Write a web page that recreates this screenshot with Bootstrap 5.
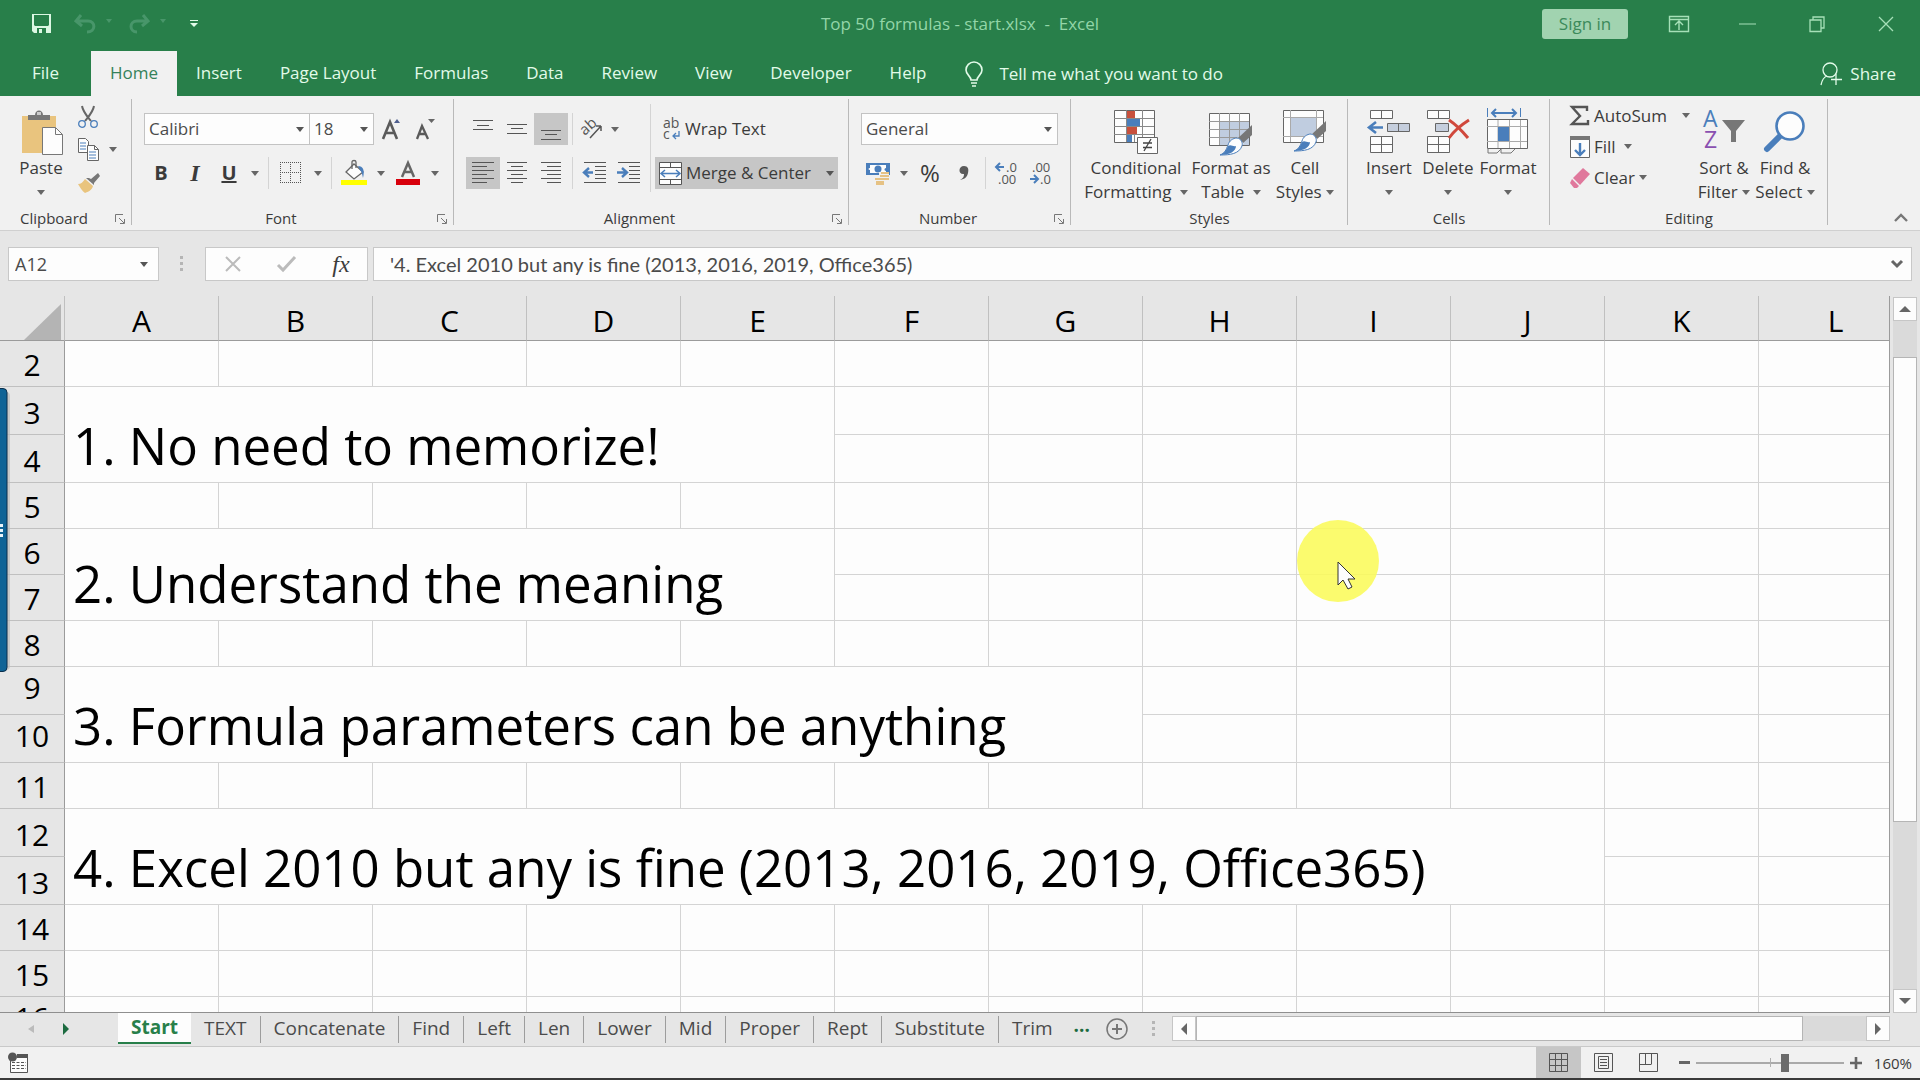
<!doctype html>
<html lang="en">
<head>
<meta charset="utf-8">
<meta name="viewport" content="width=device-width, initial-scale=1">
<title>Top 50 formulas - start.xlsx - Excel</title>
<link href="https://cdn.jsdelivr.net/npm/bootstrap@5.3.0/dist/css/bootstrap.min.css" rel="stylesheet">
<script src="https://cdn.jsdelivr.net/npm/bootstrap@5.3.0/dist/js/bootstrap.bundle.min.js"></script>
<style>
:root{--green:#287f4a;--mint:#e2fbe9;--ink:#3b3b3b;--chrome:#e6e6e6;--ribbon:#f1f1f1;--line:#b9b9b9;--blue:#4a7ebb}
body{font-family:"Open Sans","Noto Sans",sans-serif;font-size:17px;line-height:24px;color:var(--ink);background:var(--chrome)}
button{background:none;border:0;padding:0;color:inherit;flex:none}
svg{display:block;flex:none;overflow:visible}
/* title bar */
.titlebar{background:var(--green);height:51px;color:#93d6a8}
.titlebar .edge{flex:1 1 0}
.winbtn{width:69px;height:38px}
.signin{background:#a1d3b0;color:#3c8a5b;width:86px;height:30px;border-radius:3px}
.savebtn{margin-left:32px}
/* ribbon tabs */
.tabstrip{background:var(--green);height:45px}
.tabstrip .nav-link{color:var(--mint);padding:0 19px;line-height:44px;border-radius:0}
.tabstrip .nav-link.active{background:var(--ribbon);color:#35825a}
.tabstrip .filetab{width:91px;padding:0;text-align:center}
.tellme,.sharebtn{color:var(--mint)}
/* ribbon */
.ribbon{background:var(--ribbon);height:135px;border-bottom:1px solid #d0d0d0}
.rgroup{flex:none;background:linear-gradient(var(--line),var(--line)) right 3px/1px 126px no-repeat}
.rgroup .rbody{height:112px}
.rlabel{height:22px;line-height:21px;font-size:15px;text-align:center;padding-right:24px}
.rlabel.wide{padding-right:0}
.rlabel .launch{position:absolute;right:7px;top:6px}
.rows{padding-top:17px;display:flex;flex-direction:column;gap:12px}
.rows>div{display:flex;height:32px;align-items:center}
.tool,.tool36{width:34px;height:32px;display:flex;align-items:center;justify-content:center}
.tool36{width:36px}
.carat{width:18px;height:32px;display:flex;align-items:center;justify-content:center}
.on{background:#c6c6c6}
.vbar{width:9px;height:32px;flex:none;background:linear-gradient(#d4d4d4,#d4d4d4) center/1px 100% no-repeat}
.vbar.tall{width:10px;height:88px;margin-top:8px}
.combo{appearance:none;height:32px;border:1px solid #c3c3c3;border-radius:0;color:#4b4b4b;padding:0 4px;background:#fdfdfd url("data:image/svg+xml,%3Csvg xmlns='http://www.w3.org/2000/svg' width='8' height='5'%3E%3Cpath d='M0 0h8L4 5z' fill='%23555'/%3E%3C/svg%3E") right 5px center no-repeat}
.big{padding-top:7px;height:112px}
.big svg.pic{margin:0 auto;height:48px}
.big .two{display:block;height:24px;white-space:nowrap}
.big .two svg,.flat svg.dd{display:inline-block;vertical-align:middle}
.flat{height:31px;display:flex;align-items:center;white-space:nowrap}
/* formula bar */
.fbar{padding:16px 8px 15px}
.fbox{background-color:#fdfdfd;border:1px solid #c8c8c8;height:34px;border-radius:0}
.namebox{width:151px;padding:0 6px;font-size:18px;color:#4b4b4b;background-position:right 10px center}
.fgap{width:46px}
.fxbox{width:163px;margin-right:5px}
.fxbox button{width:54px;height:32px;display:flex;align-items:center;justify-content:center}
.ftext{font-family:Lato,"Open Sans",sans-serif;font-size:20px;color:#4b4b4b;border:0;background:none;outline:0;padding:0 16px;min-width:0}
/* sheet */
.sheetwrap{min-height:0}
.gridpane{border-right:1px solid #9b9b9b;border-bottom:1px solid #8f8f8f;background:#fdfdfd}
.cells{table-layout:fixed;border-collapse:separate;border-spacing:0;width:1913px;color:#000}
.cells td{border-right:1px solid #d4d4d4;border-bottom:1px solid #d4d4d4;padding:0 8px}
.cells th{background:var(--chrome);font-weight:400;font-size:30px;padding:0;text-align:center;border-right:1px solid #c0c0c0;border-bottom:1px solid #9b9b9b;line-height:42px;vertical-align:bottom;overflow:hidden}
.cells tbody th{border-right-color:#9b9b9b;border-bottom-color:#c0c0c0}
.cells tbody th.hi{vertical-align:top}
.cells thead th{line-height:38px}
.cells .say{font-size:51px;line-height:74px;vertical-align:bottom;white-space:nowrap}
.h45{height:45px}.h46{height:46px}.h48{height:48px}
.vscroll{width:30px;padding:1px 3px 0}
.sbtn{background:#fdfdfd;border:1px solid #c6c6c6;width:24px;height:24px;display:flex;align-items:center;justify-content:center}
.track{background:#dadada}
.thumbbar{background:#fdfdfd;border:1px solid #b5b5b5}
.pointer{position:absolute;left:1296px;top:224px}
.sidetab{position:absolute;left:0;top:388px;z-index:3}
/* sheet tabs */
.sheetbar{height:34px;color:#4b4b4b;border-bottom:1px solid #c9c9c9;font-size:19px}
.sheetnav{width:118px;height:31px}
.stab{color:#4b4b4b;padding:0 13px;line-height:24px;height:27px;border-right:1px solid #9d9d9d;text-decoration:none;margin-top:3px;white-space:nowrap}
.stab.current{background:#fdfdfd;color:#287f4a;font-weight:700;margin-top:0;height:31px;line-height:29px;border-right:0;border-bottom:2px solid #287f4a}
.stab.final{border-right:0}
.hscroll{padding:3px 30px 5px 0}
.hscroll .sbtn{width:24px;height:25px}
/* status bar */
.statusbar{height:33px;background:var(--ribbon);border-bottom:2px solid #3a3a3a}
.viewbtn{width:45px;height:31px;display:flex;align-items:center;justify-content:center}
.zoomer{appearance:none;width:148px;height:18px;margin:0 6px;background:linear-gradient(#b0b0b0,#b0b0b0) 74px center/1px 9px no-repeat,linear-gradient(#a9a9a9,#a9a9a9) center/100% 2px no-repeat}
.zoomer::-webkit-slider-thumb{appearance:none;width:8px;height:18px;background:#6b6b6b}
.pct{font-size:15px;width:50px;padding-right:8px}
</style>
</head>
<body class="vh-100 d-flex flex-column overflow-hidden position-relative">

<!-- shared symbols -->
<svg width="0" height="0" class="position-absolute" aria-hidden="true">
  <symbol id="dd" viewBox="0 0 8 5"><path d="M0 0h8L4 5z"/></symbol>
  <symbol id="launch" viewBox="0 0 10 10"><path d="M.5 8V.5H8M4 4l5 5M9.5 5v4.5H5" fill="none" stroke="#777"/></symbol>
  <symbol id="brush" viewBox="0 0 34 32"><path d="M33 1v10L23 20l-5-5z" fill="#777"/><path d="m18 14 6 6" stroke="#f1f1f1" stroke-width="2"/><path d="M18 14c4 1 6 4 5 8-3 8-12 9-22 9 5-2 6-5 8-10 1-4 5-7 9-7z" fill="#fdfdfd" stroke="#4a7ebb"/><path d="M1 31c5-2 6-5 8-9 3-2 5 1 8 0 0 5-6 9-16 9z" fill="#4a7ebb"/></symbol>
</svg>

<header class="titlebar d-flex align-items-center flex-shrink-0 pb-1">
  <div class="edge d-flex align-items-center">
    <button class="savebtn" aria-label="Save"><svg width="20" height="20" viewBox="0 0 20 20"><path d="M0 0h19v19H2l-2-2z" fill="#dcf7e3"/><path d="M2 1h15v10l-1 1H3l-1-1z" fill="#287f4a"/><path d="M5 14h9v5H5z" fill="#287f4a"/><path d="M7 15h3v4H7z" fill="#dcf7e3"/></svg></button>
    <button aria-label="Undo" class="ms-4 ps-0"><svg width="40" height="20" viewBox="1 0 40 20" fill="none" stroke="#48966a" stroke-width="3"><path d="M6 1 1 7l6 5M2 7h11c8 0 8 11-1 11"/><path d="M31 5h6l-3 4z" fill="#48966a" stroke="none"/></svg></button>
    <button aria-label="Redo" class="ms-2"><svg width="50" height="20" viewBox="-5 0 50 20" fill="none" stroke="#48966a" stroke-width="3"><path d="m14 1 5 6-6 5M18 7H8C0 7 0 18 8 18"/><path d="M31 5h6l-3 4z" fill="#48966a" stroke="none"/></svg></button>
    <button aria-label="Customize Quick Access Toolbar" class="ms-3"><svg width="8" height="8" viewBox="0 0 8 8" fill="#e2fbe9"><path d="M0 0h8v1H0zM0 3h8L4 7z"/></svg></button>
  </div>
  <div class="text-nowrap">Top 50 formulas - start.xlsx &nbsp;-&nbsp; Excel</div>
  <div class="edge d-flex align-items-center justify-content-end">
    <button class="signin me-3">Sign in</button>
    <button class="winbtn" aria-label="Ribbon display options"><svg class="mx-auto" width="20" height="16" viewBox="0 0 20 16" fill="none" stroke="#a6e0b8"><path d="M.5.5h19v15H.5zM1 3.5h18M10 14V6M6 9l4-4 4 4" stroke-width="1.4"/></svg></button>
    <button class="winbtn" aria-label="Minimize"><svg class="mx-auto" width="17" height="2"><path d="M0 1h17" stroke="#a6e0b8"/></svg></button>
    <button class="winbtn" aria-label="Restore"><svg class="mx-auto" width="16" height="16" viewBox="0 0 16 16" fill="none" stroke="#a6e0b8"><path d="M1 4h11v11.500H1zM4 4V1h11v11h-3" stroke-width="1.300"/></svg></button>
    <button class="winbtn" aria-label="Close"><svg class="mx-auto" width="16" height="16"><path d="m1 1 14 14M15 1 1 15" stroke="#a6e0b8" stroke-width="1.300"/></svg></button>
  </div>
</header>

<nav class="tabstrip d-flex align-items-stretch flex-shrink-0">
  <div class="nav flex-nowrap">
    <a class="nav-link filetab" href="#">File</a>
    <a class="nav-link active" href="#">Home</a>
    <a class="nav-link" href="#">Insert</a>
    <a class="nav-link" href="#">Page Layout</a>
    <a class="nav-link" href="#">Formulas</a>
    <a class="nav-link" href="#">Data</a>
    <a class="nav-link" href="#">Review</a>
    <a class="nav-link" href="#">View</a>
    <a class="nav-link" href="#">Developer</a>
    <a class="nav-link" href="#">Help</a>
  </div>
  <button class="tellme d-flex align-items-center ms-3">
    <svg class="mx-1" width="18" height="26" viewBox="0 0 18 26" fill="none" stroke="#e2fbe9" stroke-width="1.600"><path d="M6 19c0-4-5-5-5-10a8 8 0 0 1 16 0c0 5-5 6-5 10zM6 22h6M7 25h4"/></svg>
    <span class="ms-2 ps-1">Tell me what you want to do</span></button>
  <button class="sharebtn d-flex align-items-center ms-auto me-4">
    <svg class="me-2" width="22" height="24" viewBox="0 0 22 24" fill="none" stroke="#e2fbe9" stroke-width="1.300"><circle cx="10" cy="8" r="7"/><path d="M1 23c1-5 3-8 6-9M16 12v11M11 17.500h11"/></svg>Share</button>
</nav>

<section class="ribbon d-flex position-relative flex-shrink-0" aria-label="Home ribbon">
  <div class="rgroup" style="width:132px">
    <div class="rbody d-flex ps-3">
      <button class="big" style="width:50px">
        <svg class="pic" width="44" viewBox="0 0 44 48"><path d="M3 8h34v37H3z" fill="#e9c47e"/><path d="M9 7h7c0-6 8-6 8 0h7v5H9z" fill="#777"/><path d="M18 4h4v3h-4z" fill="#ccc"/><path d="M23.500 19.500h13l7 7v20h-20z" fill="#fdfdfd" stroke="#777"/><path d="M36.500 19.500v7h7" fill="none" stroke="#777"/></svg>
        <span class="two">Paste</span><span class="two"><svg width="8" height="5" fill="#666"><use href="#dd"/></svg></span></button>
      <div class="pt-1 ps-2 ms-1">
        <button class="d-flex align-items-center" style="height:33px" aria-label="Cut"><svg width="20" height="22" viewBox="0 0 20 22" fill="none"><path d="M4 0c1 6 5 10 9 15M16 0c-1 6-5 10-9 15" stroke="#666" stroke-width="2"/><circle cx="4" cy="18" r="3.300" stroke="#4a7ebb" stroke-width="1.300"/><circle cx="16" cy="18" r="3.300" stroke="#4a7ebb" stroke-width="1.300"/></svg></button>
        <button class="d-flex align-items-center" style="height:33px" aria-label="Copy"><svg width="21" height="23" viewBox="0 0 21 23" fill="#fdfdfd" stroke="#666"><path d="M.5.5h7l3 3v11H.5z"/><path d="M2 5h6M2 8h6M2 11h6" stroke="#4a7ebb"/><path d="M9.500 7.500h7l4 4v11h-11z"/><path d="M16.500 7.500v4h4" fill="none"/><path d="M11 14h7M11 17h7M11 20h7" stroke="#4a7ebb"/></svg><svg class="ms-2" width="12" height="5" fill="#666"><use href="#dd"/></svg></button>
        <button class="d-flex align-items-center" style="height:33px" aria-label="Format Painter"><svg width="22" height="20" viewBox="0 0 22 20"><path d="M20 0l2 3-6 7 0 2-8-7h3l2 1z" fill="#777"/><path d="M7 6l8 7c-1 4-5 6-8 7-3-2-5-6-7-9 3 0 5-2 7-5z" fill="#e9c47e"/></svg></button>
      </div>
    </div>
    <div class="rlabel position-relative">Clipboard<svg class="launch" width="10" height="10"><use href="#launch"/></svg></div>
  </div>

  <div class="rgroup" style="width:322px">
    <div class="rbody rows ps-2 ms-1">
      <div>
        <select class="combo" aria-label="Font" style="width:166px"><option>Calibri</option></select>
        <select class="combo border-start-0" aria-label="Font size" style="width:64px"><option>18</option></select>
        <button class="tool" aria-label="Increase font size"><svg width="20" height="24" viewBox="0 0 20 24"><path d="M2 22 9 5l7 17M4.500 16h9" fill="none" stroke="#5a5a5a" stroke-width="2.600"/><path d="M13 6h6l-3-4z" fill="#4f5f8f"/></svg></button>
        <button class="tool" aria-label="Decrease font size"><svg width="20" height="24" viewBox="0 0 20 24"><path d="M2 22 7 9l6 13M4 17h7" fill="none" stroke="#5a5a5a" stroke-width="2.300"/><path d="M13 2h7l-3.500 4z" fill="#666"/></svg></button>
      </div>
      <div>
        <button class="tool fw-bold fs-5">B</button>
        <button class="tool fs-4 fst-italic fw-bold" style="font-family:'Liberation Serif',serif">I</button>
        <button class="tool fw-bold fs-5 text-decoration-underline">U</button>
        <button class="carat" aria-label="Underline options"><svg width="8" height="5" fill="#666"><use href="#dd"/></svg></button>
        <span class="vbar"></span>
        <button class="tool36" aria-label="Borders"><svg width="22" height="22" viewBox="0 0 22 22" fill="none" stroke="#555" stroke-dasharray="1 1"><path d="M.5 0v22M10.500 0v22M20.500 0v22M0 .5h21M0 10.500h21"/><path d="M0 20.500h22"/></svg></button>
        <button class="carat" aria-label="Border options"><svg width="8" height="5" fill="#666"><use href="#dd"/></svg></button>
        <span class="vbar"></span>
        <button class="tool36" aria-label="Fill color"><svg width="26" height="26" viewBox="0 0 26 26"><path d="m13 4 9 8-9 7-8-7z" fill="#fdfdfd" stroke="#666" stroke-width="1.300"/><path d="M11 9V2c0-2 4-2 4 0v6" fill="none" stroke="#666" stroke-width="1.300"/><path d="M17 6c5 0 7 4 5 12-1-4-1-6-3-8z" fill="#4a7ebb"/><path d="M0 20h26v5H0z" fill="#ff0"/></svg></button>
        <button class="carat" aria-label="Fill options"><svg width="8" height="5" fill="#666"><use href="#dd"/></svg></button>
        <button class="tool36" aria-label="Font color"><svg width="24" height="24" viewBox="0 0 24 24"><path d="m6 16 6-14 6 14M8 11h8" fill="none" stroke="#666" stroke-width="2.500"/><path d="M0 18h24v6H0z" fill="#d8000c"/></svg></button>
        <button class="carat" aria-label="Font color options"><svg width="8" height="5" fill="#666"><use href="#dd"/></svg></button>
      </div>
    </div>
    <div class="rlabel position-relative">Font<svg class="launch" width="10" height="10"><use href="#launch"/></svg></div>
  </div>

  <div class="rgroup" style="width:395px">
    <div class="rbody d-flex ps-2 ms-1">
      <div class="rows">
        <div>
          <button class="tool" aria-label="Top align"><svg width="20" height="24"><path d="M0 3.500h20M4 8.500h12M0 12.500h20" stroke="#555"/></svg></button>
          <button class="tool" aria-label="Middle align"><svg width="20" height="24"><path d="M0 7.500h20M4 11.500h12M0 16.500h20" stroke="#555"/></svg></button>
          <button class="tool on" aria-label="Bottom align"><svg width="20" height="24"><path d="M0 13.500h20M4 17.500h12M0 22.500h20" stroke="#555"/></svg></button>
          <span class="vbar"></span>
          <button class="d-flex align-items-center ps-1" aria-label="Orientation"><svg width="26" height="22" viewBox="0 0 26 22" fill="#555"><text x="0" y="14" font-size="15" transform="rotate(-42 7 11)">ab</text><path d="M9 20 20 8M20 8v5M20 8h-5" fill="none" stroke="#555" stroke-width="1.500"/></svg><svg class="ms-1" width="8" height="5" fill="#666"><use href="#dd"/></svg></button>
        </div>
        <div>
          <button class="tool on" aria-label="Align left"><svg width="22" height="24"><path d="M0 1.500h22M0 5.500h15M0 9.500h22M0 13.500h15M0 17.500h22M0 21.500h15" stroke="#555"/></svg></button>
          <button class="tool" aria-label="Center"><svg width="20" height="24"><path d="M0 1.500h20M4 5.500h12M0 9.500h20M4 13.500h12M0 17.500h20M4 21.500h12" stroke="#555"/></svg></button>
          <button class="tool" aria-label="Align right"><svg width="20" height="24"><path d="M0 1.500h20M6 5.500h14M0 9.500h20M6 13.500h14M0 17.500h20M6 21.500h14" stroke="#555"/></svg></button>
          <span class="vbar"></span>
          <button class="tool" aria-label="Decrease indent"><svg width="23" height="24"><path d="M1 1.500h22M12 5.500h11M12 9.500h11M12 13.500h11M12 17.500h11M1 21.500h22" stroke="#555"/><path d="M10 11.500H1M6 7l-5 4.500L6 16" fill="none" stroke="#4a7ebb" stroke-width="2.400"/></svg></button>
          <button class="tool" aria-label="Increase indent"><svg width="23" height="24"><path d="M1 1.500h22M12 5.500h11M12 9.500h11M12 13.500h11M12 17.500h11M1 21.500h22" stroke="#555"/><path d="M0 11.500h9M5 7l5 4.500L5 16" fill="none" stroke="#4a7ebb" stroke-width="2.400"/></svg></button>
        </div>
      </div>
      <span class="vbar tall"></span>
      <div class="rows">
        <div><button class="d-flex align-items-center ps-2"><svg width="18" height="26" viewBox="0 0 18 26" fill="#555"><text x="0" y="12" font-size="14">ab</text><text x="0" y="23" font-size="14">c</text><path d="M16 15v5h-6M13 17l-3 3 3 3" fill="none" stroke="#4a7ebb" stroke-width="1.300"/></svg><span class="ms-1">Wrap Text</span></button></div>
        <div><button class="on d-flex align-items-center h-100 ps-1" style="width:183px"><svg width="23" height="23" viewBox="0 0 23 23"><path d="M.5.5h22v22H.5z" fill="#fdfdfd" stroke="#555"/><path d="M0 5.500h23M0 17.500h23M11.500 0v5M11.500 18v5" stroke="#555"/><path d="M3 11.500h17M6 8l-4 3.500L6 15M17 8l4 3.500-4 3.500" fill="none" stroke="#4a7ebb" stroke-width="1.500"/></svg><span class="ms-1">Merge &amp; Center</span><svg class="ms-auto me-1" width="8" height="5" fill="#555"><use href="#dd"/></svg></button></div>
      </div>
    </div>
    <div class="rlabel position-relative">Alignment<svg class="launch" width="10" height="10"><use href="#launch"/></svg></div>
  </div>

  <div class="rgroup" style="width:222px">
    <div class="rbody rows ps-2 ms-1">
      <div><select class="combo" aria-label="Number format" style="width:197px"><option>General</option></select></div>
      <div>
        <button class="tool" aria-label="Accounting format"><svg width="24" height="24" viewBox="0 0 24 24"><path d="M0 2h24v12H0z" fill="#4a7ebb"/><path d="M4 4h16v3c-2 0-2 3 0 3v2H4V9c-2 0-2-2 0-2z" fill="#fdfdfd"/><circle cx="12" cy="8" r="3.500" fill="#4a7ebb"/><path d="M13 11h10v13H9v-6h4z" fill="#f1f1f1"/><path d="M15 12h8M14 15h9M9 18h9M14 18h9M10 21h8M10 23h8" stroke="#e2b260" stroke-width="1.600"/></svg></button>
        <button class="carat" aria-label="Accounting options"><svg width="8" height="5" fill="#666"><use href="#dd"/></svg></button>
        <button class="tool fs-4">%</button>
        <button class="tool" aria-label="Comma style"><svg width="10" height="15" viewBox="0 0 10 15"><path d="M5 0c4 0 5 3 4 7-1 4-3 6-8 7 3-2 4-3 4-6C-1 9-1 0 5 0z" fill="#5a5a5a"/></svg></button>
        <span class="vbar"></span>
        <button class="tool" aria-label="Increase decimal"><svg width="24" height="24" fill="#555" font-size="13"><text x="11" y="11">.0</text><text x="3" y="23">.00</text><path d="M9 6H1M5 2 1 6l4 4" fill="none" stroke="#4a7ebb" stroke-width="2"/></svg></button>
        <button class="tool" aria-label="Decrease decimal"><svg width="24" height="24" fill="#555" font-size="13"><text x="3" y="11">.00</text><text x="11" y="23">.0</text><path d="M1 18h8M5 14l4 4-4 4" fill="none" stroke="#4a7ebb" stroke-width="2"/></svg></button>
      </div>
    </div>
    <div class="rlabel position-relative">Number<svg class="launch" width="10" height="10"><use href="#launch"/></svg></div>
  </div>

  <div class="rgroup" style="width:277px">
    <div class="rbody d-flex ps-2 ms-1">
      <button class="big" style="width:106px"><svg class="pic" width="44" viewBox="0 0 44 48"><path d="M.5 2.500h40v32H.5z" fill="#fdfdfd" stroke="#666"/><path d="M0 10.500h40M0 18.500h40M0 26.500h40M12.500 2v32M20.500 2v32M28.500 2v32" stroke="#888"/><path d="M13 3h8v7h-8zM13 19h10v7H13z" fill="#c8503c"/><path d="M13 11h13v7H13zM13 27h5v7h-5z" fill="#4a7ebb"/><path d="M23.500 29.500h20v16h-20z" fill="#fdfdfd" stroke="#666"/><path d="M29 35h9M29 39.500h9M37 31l-7 12" stroke="#444" stroke-width="1.300"/></svg>
        <span class="two">Conditional</span><span class="two">Formatting <svg class="ms-1" width="8" height="5" fill="#666"><use href="#dd"/></svg></span></button>
      <button class="big" style="width:84px"><svg class="pic" width="44" viewBox="0 0 44 48"><path d="M.5 5.500h40v32H.5z" fill="#fdfdfd" stroke="#666"/><path d="M11 14h29v23H11z" fill="#c0cde0"/><path d="M0 13.500h40M0 21.500h40M0 29.500h40M10.500 5v32M20.500 5v32M30.500 5v32" stroke="#999"/><use href="#brush" x="10" y="16" width="34" height="32"/></svg>
        <span class="two">Format as</span><span class="two">Table <svg class="ms-1" width="8" height="5" fill="#666"><use href="#dd"/></svg></span></button>
      <button class="big" style="width:64px"><svg class="pic" width="44" viewBox="0 0 44 48"><path d="M.5 2.500h40v32H.5z" fill="#fdfdfd" stroke="#666"/><path d="M8 10h26v18H8z" fill="#c0cde0"/><path d="M0 9.500h40M0 28.500h40M7.500 2v32M33.500 2v32" stroke="#aaa"/><use href="#brush" x="10" y="12" width="34" height="32"/></svg>
        <span class="two">Cell</span><span class="two">Styles <svg width="8" height="5" fill="#666"><use href="#dd"/></svg></span></button>
    </div>
    <div class="rlabel wide">Styles</div>
  </div>

  <div class="rgroup" style="width:202px">
    <div class="rbody d-flex ps-2 ms-1">
      <button class="big" style="width:58px"><svg class="pic" width="44" viewBox="0 0 44 48"><g fill="#fdfdfd" stroke="#666"><path d="M3.500 2.500h22v8h-22zM14.500 2v8M3.500 28.500h22v16h-22zM14.500 28v16M3 36.500h22"/><path d="M20.500 15.500h22v8h-22zM31.500 15v8" fill="#c5cedd"/></g><path d="M16 19.500H2M9 14l-7 5.500L9 25" fill="none" stroke="#4a7ebb" stroke-width="2.600"/></svg>
        <span class="two">Insert</span><span class="two"><svg width="8" height="5" fill="#666"><use href="#dd"/></svg></span></button>
      <button class="big" style="width:60px"><svg class="pic" width="44" viewBox="0 0 44 48"><g fill="#fdfdfd" stroke="#666"><path d="M1.500 2.500h22v8h-22zM12.500 2v8M1.500 28.500h22v16h-22zM12.500 28v16M1 36.500h22"/><path d="M9.500 15.500h13v8h-13z" fill="#c5cedd"/></g><path d="M23 12c6 4 14 12 19 18M43 12c-8 5-15 11-20 18" fill="none" stroke="#d0483c" stroke-width="3"/></svg>
        <span class="two">Delete</span><span class="two"><svg width="8" height="5" fill="#666"><use href="#dd"/></svg></span></button>
      <button class="big" style="width:60px"><svg class="pic" width="42" viewBox="0 0 42 48"><path d="M.5 11.500h40v29H.5z" fill="#fdfdfd" stroke="#666"/><path d="M0 18.500h40M0 33.500h40M11 12v28M22.500 12v28M33.500 12v28" stroke="#aaa"/><path d="M11 19h11v14H11z" fill="#4a7ebb"/><path d="M.5 0v9M33.500 0v9" stroke="#4a7ebb"/><path d="M5 5h24M9 1 5 5l4 4M25 1l4 4-4 4" fill="none" stroke="#4a7ebb" stroke-width="2"/><path d="M1 41v4h9l4-4v4h10l4-4" fill="none" stroke="#777"/></svg>
        <span class="two">Format</span><span class="two"><svg width="8" height="5" fill="#666"><use href="#dd"/></svg></span></button>
    </div>
    <div class="rlabel wide">Cells</div>
  </div>

  <div class="rgroup" style="width:278px">
    <div class="rbody d-flex ps-3">
      <div class="pt-1 ps-1" style="width:128px">
        <button class="flat w-100"><svg width="20" height="20" viewBox="0 0 20 20"><path d="M17 5V1H2l8 9-8 8h16v-4" fill="none" stroke="#555" stroke-width="2.400"/></svg><span class="ms-1">AutoSum</span><svg class="dd ms-auto me-1" width="8" height="5" fill="#666"><use href="#dd"/></svg></button>
        <button class="flat"><svg width="20" height="22" viewBox="0 0 20 22"><path d="M.5.500h19v21H.5z" fill="#fdfdfd" stroke="#666"/><path d="M0 0h20v4H0z" fill="#777"/><path d="M10 7v12M5 14l5 5 5-5" fill="none" stroke="#4a7ebb" stroke-width="2.400"/></svg><span class="ms-1 pe-1 me-1">Fill</span><svg class="dd" width="8" height="5" fill="#666"><use href="#dd"/></svg></button>
        <button class="flat"><svg width="20" height="20" viewBox="0 0 20 20"><path d="m13 0 7 6-10 11-7-7z" fill="#e0789c"/><path d="m2 11 7 7-2 2H4l-4-5z" fill="#e0789c"/></svg><span class="ms-1 pe-1">Clear</span><svg class="dd" width="8" height="5" fill="#666"><use href="#dd"/></svg></button>
      </div>
      <button class="big" style="width:60px"><svg class="pic" width="42" viewBox="0 0 42 48"><text x="0" y="19" font-size="23" fill="#4a7ebb">A</text><text x="1" y="40" font-size="23" fill="#8a50b0">Z</text><path d="M19 12h23L33 23v11h-5V23z" fill="#777"/></svg>
        <span class="two">Sort &amp;</span><span class="two">Filter <svg width="8" height="5" fill="#666"><use href="#dd"/></svg></span></button>
      <button class="big" style="width:62px"><svg class="pic" width="42" viewBox="0 0 42 48"><path d="M17 27 3 41" stroke="#4a7ebb" stroke-width="6" stroke-linecap="round"/><circle cx="26" cy="18" r="13.500" fill="#fdfdfd" stroke="#4a7ebb" stroke-width="2.600"/></svg>
        <span class="two">Find &amp;</span><span class="two">Select <svg width="8" height="5" fill="#666"><use href="#dd"/></svg></span></button>
    </div>
    <div class="rlabel wide">Editing</div>
  </div>
  <button class="ms-auto align-self-end me-2 pb-2" aria-label="Collapse the ribbon"><svg class="me-1" width="14" height="9"><path d="m1 8 6-6 6 6" fill="none" stroke="#777" stroke-width="2.400"/></svg></button>
</section>

<div class="fbar d-flex align-items-center flex-shrink-0">
  <select class="combo fbox namebox" aria-label="Name box"><option>A12</option></select>
  <span class="fgap"><svg class="mx-auto" width="4" height="16" fill="#b5b5b5"><path d="M0 0h3v3H0zM0 6h3v3H0zM0 12h3v3H0z"/></svg></span>
  <div class="fbox fxbox d-flex">
    <button aria-label="Cancel"><svg width="16" height="16"><path d="m1 1 14 14M15 1 1 15" stroke="#bbb" stroke-width="2"/></svg></button>
    <button aria-label="Enter"><svg width="20" height="16"><path d="m1 9 5 5L18 1" fill="none" stroke="#bbb" stroke-width="3"/></svg></button>
    <button class="fst-italic fs-4" style="font-family:'Liberation Serif',serif" aria-label="Insert function">fx</button>
  </div>
  <div class="fbox flex-fill d-flex align-items-center">
    <input class="ftext flex-fill" aria-label="Formula bar" value="'4. Excel 2010 but any is fine (2013, 2016, 2019, Office365)">
    <button class="me-1 pe-1" aria-label="Expand formula bar"><svg width="12" height="9"><path d="m1 1 5 5 5-5" fill="none" stroke="#666" stroke-width="3"/></svg></button>
  </div>
</div>

<main class="sheetwrap d-flex flex-fill position-relative">
  <div class="gridpane flex-fill overflow-hidden">
    <table class="cells">
      <colgroup><col style="width:65px"><col span="12"></colgroup>
      <thead><tr class="h45"><th><svg class="ms-4" width="38" height="36"><path d="M37 0v36H0z" fill="#b4b4b4"/></svg></th><th>A</th><th>B</th><th>C</th><th>D</th><th>E</th><th>F</th><th>G</th><th>H</th><th>I</th><th>J</th><th>K</th><th>L</th></tr></thead>
      <tbody>
        <tr class="h46"><th>2</th><td></td><td></td><td></td><td></td><td></td><td></td><td></td><td></td><td></td><td></td><td></td><td></td></tr>
        <tr class="h48"><th>3</th><td class="say" colspan="5" rowspan="2">1. No need to memorize!</td><td></td><td></td><td></td><td></td><td></td><td></td><td></td></tr>
        <tr class="h48"><th>4</th><td></td><td></td><td></td><td></td><td></td><td></td><td></td></tr>
        <tr class="h46"><th>5</th><td></td><td></td><td></td><td></td><td></td><td></td><td></td><td></td><td></td><td></td><td></td><td></td></tr>
        <tr class="h46"><th>6</th><td class="say" colspan="5" rowspan="2">2. Understand the meaning</td><td></td><td></td><td></td><td></td><td></td><td></td><td></td></tr>
        <tr class="h46"><th>7</th><td></td><td></td><td></td><td></td><td></td><td></td><td></td></tr>
        <tr class="h46"><th>8</th><td></td><td></td><td></td><td></td><td></td><td></td><td></td><td></td><td></td><td></td><td></td><td></td></tr>
        <tr class="h48"><th class="hi">9</th><td class="say" colspan="7" rowspan="2">3. Formula parameters can be anything</td><td></td><td></td><td></td><td></td><td></td></tr>
        <tr class="h48"><th class="hi">10</th><td></td><td></td><td></td><td></td><td></td></tr>
        <tr class="h46"><th>11</th><td></td><td></td><td></td><td></td><td></td><td></td><td></td><td></td><td></td><td></td><td></td><td></td></tr>
        <tr class="h48"><th>12</th><td class="say" colspan="10" rowspan="2">4. Excel 2010 but any is fine (2013, 2016, 2019, Office365)</td><td></td><td></td></tr>
        <tr class="h48"><th>13</th><td></td><td></td></tr>
        <tr class="h46"><th>14</th><td></td><td></td><td></td><td></td><td></td><td></td><td></td><td></td><td></td><td></td><td></td><td></td></tr>
        <tr class="h46"><th>15</th><td></td><td></td><td></td><td></td><td></td><td></td><td></td><td></td><td></td><td></td><td></td><td></td></tr>
        <tr class="h46"><th class="hi">16</th><td></td><td></td><td></td><td></td><td></td><td></td><td></td><td></td><td></td><td></td><td></td><td></td></tr>
      </tbody>
    </table>
  </div>
  <div class="vscroll d-flex flex-column flex-shrink-0">
    <button class="sbtn" aria-label="Scroll up"><svg width="12" height="6"><path d="M0 6h12L6 0z" fill="#666"/></svg></button>
    <div class="track flex-fill d-flex flex-column">
      <div style="flex:36 0 0"></div><div class="thumbbar" style="flex:465 0 0"></div><div style="flex:168 0 0"></div>
    </div>
    <button class="sbtn" aria-label="Scroll down"><svg width="12" height="6"><path d="M0 0h12L6 6z" fill="#666"/></svg></button>
  </div>
  <svg class="pointer" width="84" height="84" viewBox="0 0 84 84"><circle cx="42" cy="41" r="41" fill="#fbfb5a" fill-opacity=".88"/><path d="M42 42v23l5-5 5 9 4-2-4-8h7z" fill="#fdfdfd" stroke="#333"/></svg>
</main>

<svg class="sidetab" width="14" height="288" viewBox="0 0 14 288"><path d="M0 4h6q4 0 4 4v270q0 4-4 4H0z" fill="#bbb" opacity=".7"/><path d="M-1 .5h4q4 0 4 4v275q0 4-4 4h-4z" fill="#0f6396" stroke="#0a2f4c"/><path d="M0 136h3v3H0zM0 141h3v3H0zM0 146h3v3H0z" fill="#e8f4fb"/></svg>

<div class="sheetbar d-flex align-items-start flex-shrink-0">
  <div class="sheetnav d-flex align-items-center">
    <button class="ms-4 ps-1" aria-label="Previous sheet"><svg width="6" height="8"><path d="M6 0v8L0 4z" fill="#bbb"/></svg></button>
    <button class="ms-4 ps-1" aria-label="Next sheet"><svg width="8" height="12"><path d="M1 0v12l6-6z" fill="#1c6b40"/></svg></button>
  </div>
  <a class="stab current" href="#">Start</a><a class="stab" href="#">TEXT</a><a class="stab" href="#">Concatenate</a><a class="stab" href="#">Find</a><a class="stab" href="#">Left</a><a class="stab" href="#">Len</a><a class="stab" href="#">Lower</a><a class="stab" href="#">Mid</a><a class="stab" href="#">Proper</a><a class="stab" href="#">Rept</a><a class="stab" href="#">Substitute</a><a class="stab final" href="#">Trim</a>
  <button class="fw-bold ms-2" style="color:#1c6b40" aria-label="More sheets">...</button>
  <button class="ms-3 pt-1" aria-label="New sheet"><svg width="22" height="23" viewBox="0 0 22 23" fill="none" stroke="#777" stroke-width="1.500"><circle cx="11" cy="12" r="10"/><path d="M11 7v10M6 12h10" stroke-width="2"/></svg></button>
  <svg class="ms-4 mt-2" width="4" height="17" fill="#b5b5b5"><path d="M0 0h3v3H0zM0 6h3v3H0zM0 12h3v3H0z"/></svg>
  <div class="hscroll ms-3 flex-fill d-flex">
    <button class="sbtn" aria-label="Scroll left"><svg width="6" height="12"><path d="M6 0v12L0 6z" fill="#666"/></svg></button>
    <div class="track flex-fill d-flex"><div class="thumbbar" style="flex:609 0 0"></div><div style="flex:63 0 0"></div></div>
    <button class="sbtn" aria-label="Scroll right"><svg width="6" height="12"><path d="M0 0v12l6-6z" fill="#666"/></svg></button>
  </div>
</div>

<footer class="statusbar d-flex align-items-center flex-shrink-0">
  <button class="ms-2" aria-label="Record macro"><svg width="21" height="21" viewBox="0 0 21 21"><path d="M2.500 5v15.500h17V3" fill="#fdfdfd" stroke="#555"/><path d="M9 2h11v4H9z" fill="#555"/><path d="M4 10.500h14M4 13.500h14M4 16.500h14" stroke="#555" stroke-dasharray="3 1.500"/><circle cx="4.500" cy="5" r="4.500" fill="#555"/></svg></button>
  <button class="viewbtn on ms-auto" aria-label="Normal view"><svg width="20" height="20" fill="none" stroke="#555"><path d="M.5.5h18v18H.5zM6.500 0v18M12.500 0v18M0 6.500h18M0 12.500h18"/></svg></button>
  <button class="viewbtn" aria-label="Page layout view"><svg width="20" height="20" fill="none" stroke="#555"><path d="M.5.5h18v18H.5zM4.500 3.500h10v12h-10zM6 6.500h7M6 9.500h7M6 12.500h7"/></svg></button>
  <button class="viewbtn" aria-label="Page break preview"><svg width="20" height="20" fill="none" stroke="#555"><path d="M.5.5h18v18H.5zM6.500 0v11M12.500 0v11M0 11.500h12.500"/></svg></button>
  <button class="ms-2" aria-label="Zoom out"><svg width="11" height="3"><path d="M0 0h11v3H0z" fill="#666"/></svg></button>
  <input class="zoomer" type="range" min="0" max="100" value="61" aria-label="Zoom">
  <button class="me-2" aria-label="Zoom in"><svg width="12" height="12"><path d="M0 6h12M6 0v12" stroke="#666" stroke-width="2.600"/></svg></button>
  <span class="pct text-end">160%</span>
</footer>
</body>
</html>
